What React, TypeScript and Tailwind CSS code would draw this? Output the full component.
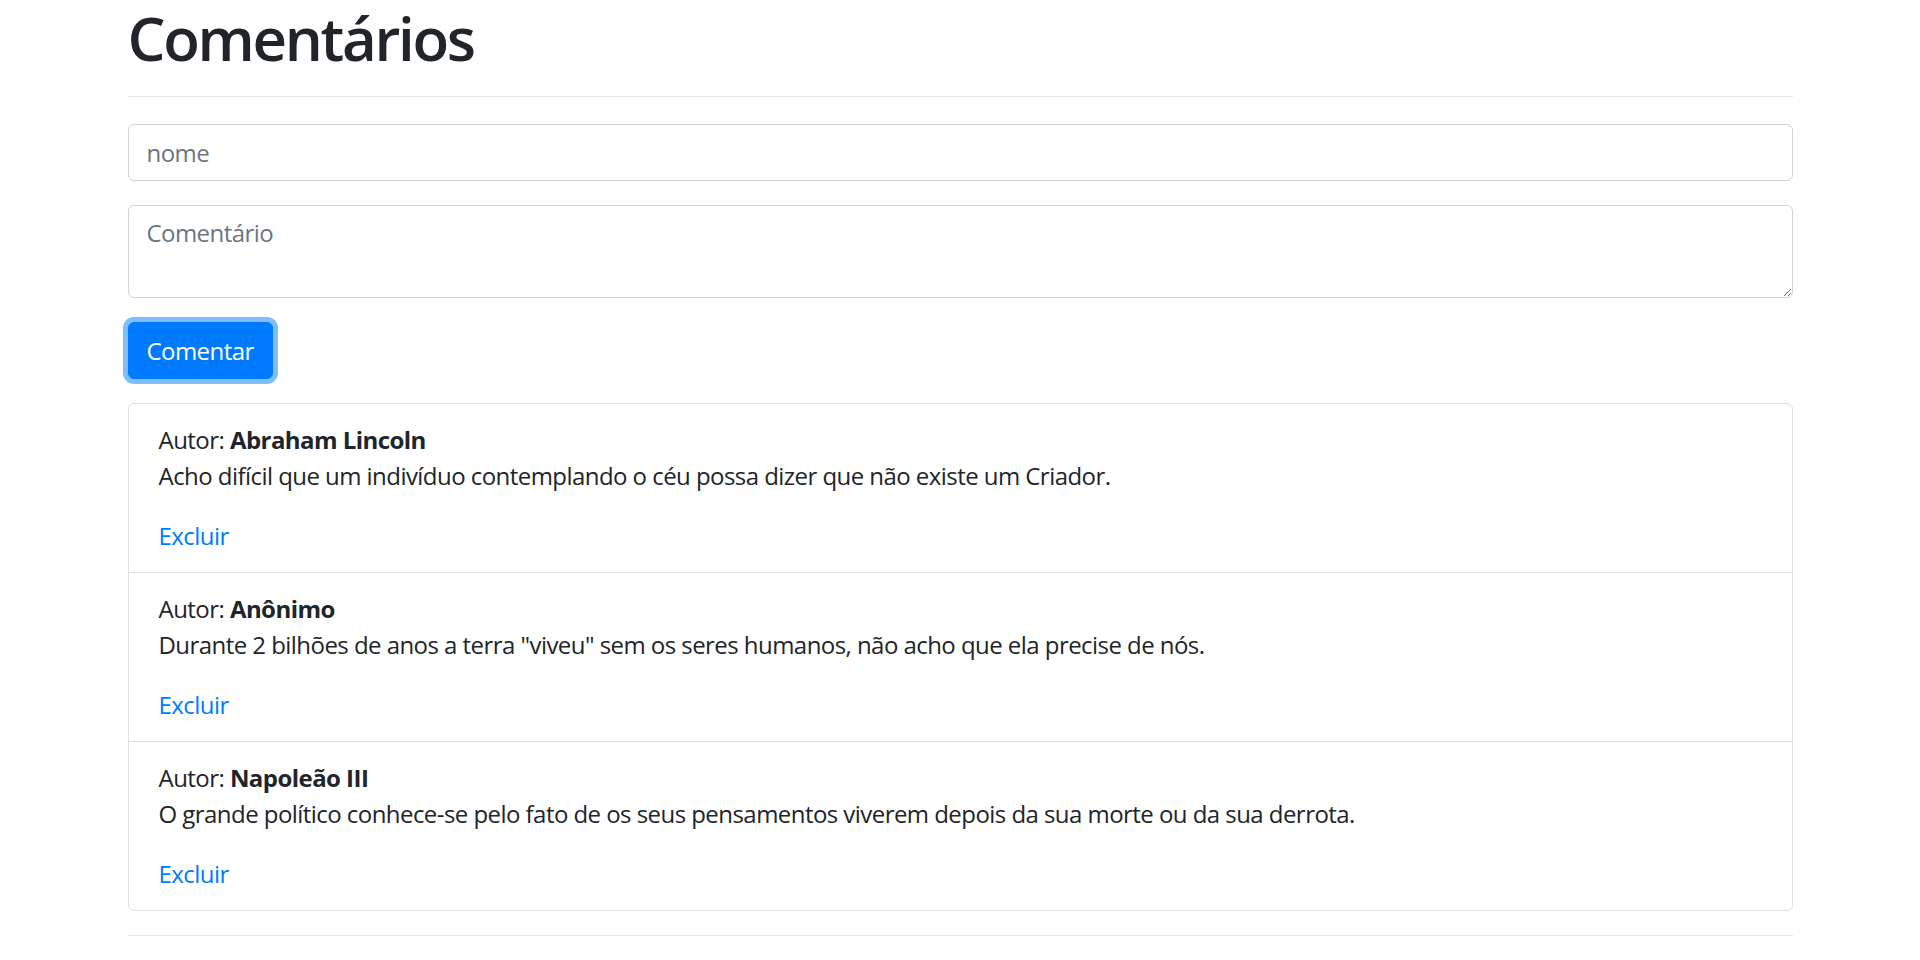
import React from "react";

type Comment = {
  id: number;
  author: string;
  text: string;
};

const comments: Comment[] = [
  {
    id: 1,
    author: "Abraham Lincoln",
    text: "Acho difícil que um indivíduo contemplando o céu possa dizer que não existe um Criador.",
  },
  {
    id: 2,
    author: "Anônimo",
    text: 'Durante 2 bilhões de anos a terra "viveu" sem os seres humanos, não acho que ela precise de nós.',
  },
  {
    id: 3,
    author: "Napoleão III",
    text: "O grande político conhece-se pelo fato de os seus pensamentos viverem depois da sua morte ou da sua derrota.",
  },
];

const App: React.FC = () => {
  return (
    <div
      className="min-h-[960px] bg-white text-[#212529] text-[24px] leading-[36px] tracking-[-0.55px]"
      style={{ fontFamily: '"Open Sans", "Noto Sans", sans-serif' }}
    >
      <div className="mx-auto w-[1665px]">
        <h1 className="text-[60px] leading-[72px] font-semibold tracking-[-2.3px] m-0 pt-[2px]">
          Comentários
        </h1>
        <hr className="mt-[22px] mb-[27px] h-0 border-0 border-t-[1.5px] border-[#e6e6e6]" />

        <form className="flex flex-col" onSubmit={(e) => e.preventDefault()}>
          <input
            type="text"
            placeholder="nome"
            className="h-[57px] w-full rounded-[6px] border-[1.5px] border-[#ced4da] px-[18px] py-[9px] text-[24px] leading-[36px] tracking-[-0.55px] text-[#495057] placeholder:text-[#6c757d] outline-none"
          />
          <textarea
            rows={2}
            placeholder="Comentário"
            className="mt-[24px] h-[93px] w-full resize-y rounded-[6px] border-[1.5px] border-[#ced4da] px-[18px] py-[9px] text-[24px] leading-[36px] tracking-[-0.55px] text-[#495057] placeholder:text-[#6c757d] outline-none"
          />
          <div className="mt-[24px]">
            <button
              type="submit"
              className="h-[57px] rounded-[6px] border-[1.5px] border-[#007bff] bg-[#007bff] px-[18px] text-[24px] leading-[36px] tracking-[-0.55px] text-white shadow-[0_0_0_5px_rgba(0,123,255,0.5)]"
            >
              Comentar
            </button>
          </div>
        </form>

        <ul className="mt-[24px] rounded-[6px] border-[1.5px] border-[#dfdfdf]">
          {comments.map((c) => (
            <li
              key={c.id}
              className="border-t-[1.5px] border-[#dfdfdf] px-[30px] py-[18px] first:border-t-0"
            >
              <div>
                Autor: <strong className="font-bold">{c.author}</strong>
              </div>
              <p className="mb-[24px]">{c.text}</p>
              <a href="#" className="text-[#007bff]">
                Excluir
              </a>
            </li>
          ))}
        </ul>

        <hr className="mt-[24px] h-0 border-0 border-t-[1.5px] border-[#e6e6e6]" />
      </div>
    </div>
  );
};

export default App;
